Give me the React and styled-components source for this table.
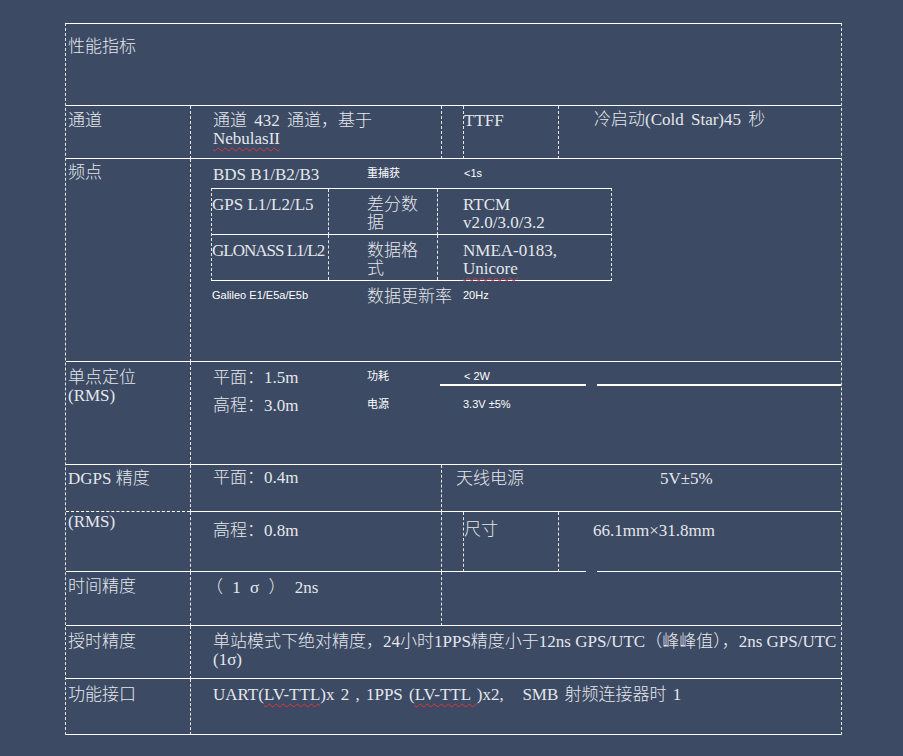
import React from 'react';
import styled, { createGlobalStyle } from 'styled-components';

const GlobalStyle = createGlobalStyle`
  html, body {
    margin: 0;
    padding: 0;
    background: #3c4a63;
  }
  body {
    min-height: 756px;
  }
`;

const Page = styled.div`
  padding: 23px 0 0 65px;
  font-family: "Liberation Serif", "Noto Sans CJK SC", serif;
  font-size: 17px;
  font-weight: 300;
  line-height: 18px;
  color: #e4e7ec;
`;

// the whole spec sheet, outer edges dashed like the Word table
const Sheet = styled.div`
  width: 777px;
  box-sizing: border-box;
  border-top: 1px solid #fff;
  border-left: 1px dashed #e6e6e6;
  border-right: 1px dashed #e6e6e6;
`;

const Row = styled.div`
  display: grid;
  grid-template-columns: ${({ $cols }) => $cols || '1fr'};
  height: ${({ $h }) => $h}px;
`;

const Cell = styled.div`
  box-sizing: border-box;
  min-width: 0;
  white-space: pre;
  word-spacing: ${({ $ws }) => $ws || 0}px;
  padding: ${({ $pt }) => $pt ?? 6}px 0 0 ${({ $pl }) => $pl ?? 22}px;
  border-left: ${({ $divider }) => ($divider ? '1px dashed #e6e6e6' : 'none')};
  border-bottom: ${({ $edge }) => ($edge === 'none' ? 'none' : `1px ${$edge || 'solid'} #fff`)};
  display: flex;
  flex-direction: column;
`;

const Label = styled(Cell).attrs({ $pl: 2 })``;

// red squiggle from the spell checker
const Typo = styled.span`
  text-decoration: underline wavy #e0363a;
  text-decoration-thickness: 1px;
  text-underline-offset: 3px;
`;

// three columns used inside the 频点 / 单点定位 blocks
const Triple = styled.div`
  display: grid;
  grid-template-columns: ${({ $cols }) => $cols || '117px 109px 1fr'};
  align-items: start;
  row-gap: ${({ $gap }) => $gap || 0}px;
  margin-top: ${({ $mt }) => $mt || 0}px;
`;

const Slot = styled.div`
  padding-left: ${({ $pl }) => $pl || 0}px;
  ${({ $small }) =>
    $small &&
    `
    font-family: "Liberation Sans", "Noto Sans CJK SC", sans-serif;
    font-size: 11px;
    font-weight: 400;
    line-height: 14px;
    color: #fff;
  `}
`;

const Nest = styled.div`
  margin-top: 4px;
  width: 401px;
  box-sizing: border-box;
  display: grid;
  grid-template-columns: 116px 109px 174px;
  border-top: 1px solid #fff;
  border-bottom: 1px solid #fff;
  border-left: 1px dashed #e6e6e6;
  border-right: 1px dashed #e6e6e6;
`;

const NestCell = styled.div`
  box-sizing: border-box;
  height: ${({ $last }) => ($last ? 45 : 46)}px;
  padding: 7px 0 0 ${({ $pl }) => $pl || 0}px;
  letter-spacing: ${({ $tight }) => ($tight ? '-1px' : 'normal')};
  white-space: nowrap;
  border-left: ${({ $divider }) => ($divider ? '1px dashed #e6e6e6' : 'none')};
  border-bottom: ${({ $last }) => ($last ? 'none' : '1px solid #fff')};
`;

// heavy rule under the 功耗 line
const Rule = styled.div`
  height: 15px;
  margin: 0 ${({ $mr }) => $mr || 0}px 0 ${({ $ml }) => $ml || 0}px;
  padding-left: ${({ $pl }) => $pl || 0}px;
  border-bottom: 2px solid #fff;
`;

const Pair = styled.div`
  display: grid;
  grid-template-columns: 204px 1fr;
`;

const Foot = styled.div`
  margin-top: auto;
  margin-left: -34px;
  display: flex;
  gap: 11px;
`;

const FootSeg = styled.div`
  height: 1px;
  background: #fff;
  width: ${({ $w }) => ($w ? `${$w}px` : 'auto')};
  flex: ${({ $w }) => ($w ? 'none' : 1)};
`;

const FIVE = '124px 251px 22px 95px 1fr';
const THREE = '124px 251px 1fr';
const TWO = '124px 1fr';

export default function App() {
  return (
    <Page>
      <GlobalStyle />
      <Sheet>
        <Row $h={82}>
          <Label $pt={14}>性能指标</Label>
        </Row>

        <Row $h={53} $cols={FIVE}>
          <Label>通道</Label>
          <Cell $divider $ws={3}>
            <span>通道 432 通道，基于</span>
            <span>
              <Typo>NebulasII</Typo>
            </span>
          </Cell>
          <Cell $divider />
          <Cell $divider $pl={0}>TTFF</Cell>
          <Cell $divider $pt={5} $pl={35} $ws={3}>冷启动(Cold Star)45 秒</Cell>
        </Row>

        <Row $h={203} $cols={TWO}>
          <Label $pt={5}>频点</Label>
          <Cell $divider $pt={7} $pl={20}>
            <Triple>
              <Slot $pl={2}>BDS B1/B2/B3</Slot>
              <Slot $small $pl={39}>重捕获</Slot>
              <Slot $small $pl={27}>&lt;1s</Slot>
            </Triple>
            <Nest>
              <NestCell>GPS L1/L2/L5</NestCell>
              <NestCell $divider $pl={38}>差分数<br />据</NestCell>
              <NestCell $divider $pl={25}>RTCM<br />v2.0/3.0/3.2</NestCell>
              <NestCell $last $tight>GLONASS L1/L2</NestCell>
              <NestCell $last $divider $pl={38}>数据格<br />式</NestCell>
              <NestCell $last $divider $pl={25}>
                NMEA-0183,<br />
                <Typo>Unicore</Typo>
              </NestCell>
            </Nest>
            <Triple $mt={7}>
              <Slot $small $pl={1}>Galileo E1/E5a/E5b</Slot>
              <Slot $pl={39}>数据更新率</Slot>
              <Slot $small $pl={26}>20Hz</Slot>
            </Triple>
          </Cell>
        </Row>

        <Row $h={103} $cols={TWO}>
          <Label $pt={7}>
            <span>单点定位</span>
            <span>(RMS)</span>
          </Label>
          <Cell $divider $pt={7} $pl={20}>
            <Triple $cols="117px 109px 152px 1fr" $gap={10}>
              <Slot $pl={2}>平面：1.5m</Slot>
              <Slot $small $pl={39}>功耗</Slot>
              <Slot $small>
                <Rule $ml={3} $mr={3} $pl={24}>&lt; 2W</Rule>
              </Slot>
              <Slot>
                <Rule $ml={8} />
              </Slot>
              <Slot $pl={2}>高程：3.0m</Slot>
              <Slot $small $pl={39}>电源</Slot>
              <Slot $small $pl={26}>3.3V ±5%</Slot>
              <Slot />
            </Triple>
          </Cell>
        </Row>

        <Row $h={47} $cols={THREE}>
          <Label $pt={5} $edge="dashed">DGPS 精度</Label>
          <Cell $divider $pt={4}>平面：0.4m</Cell>
          <Cell $divider $pt={5} $pl={14}>
            <Pair>
              <span>天线电源</span>
              <span>5V±5%</span>
            </Pair>
          </Cell>
        </Row>

        <Row $h={60} $cols={FIVE}>
          <Label $pt={1}>(RMS)</Label>
          <Cell $divider $pt={10}>高程：0.8m</Cell>
          <Cell $divider />
          <Cell $divider $pt={9} $pl={0}>尺寸</Cell>
          <Cell $divider $pt={10} $pl={34} $edge="none">
            <span>66.1mm×31.8mm</span>
            <Foot>
              <FootSeg $w={27} />
              <FootSeg />
            </Foot>
          </Cell>
        </Row>

        <Row $h={54} $cols={THREE}>
          <Label $pt={6}>时间精度</Label>
          <Cell $divider $pt={7} $pl={15} $ws={5}>（ 1 σ ） 2ns</Cell>
          <Cell $divider />
        </Row>

        <Row $h={53} $cols={TWO}>
          <Label $pt={7}>授时精度</Label>
          <Cell $divider $pt={7}>
            <span>单站模式下绝对精度，24小时1PPS精度小于12ns GPS/UTC（峰峰值），2ns GPS/UTC</span>
            <span>(1σ)</span>
          </Cell>
        </Row>

        <Row $h={56} $cols={TWO}>
          <Label $pt={7}>功能接口</Label>
          <Cell $divider $pt={7} $ws={2}>
            <span>
              UART(<Typo>LV-TTL</Typo>)x 2 , 1PPS (<Typo>LV-TTL </Typo>)
              {'x2,   SMB 射频连接器时 1'}
            </span>
          </Cell>
        </Row>
      </Sheet>
    </Page>
  );
}
